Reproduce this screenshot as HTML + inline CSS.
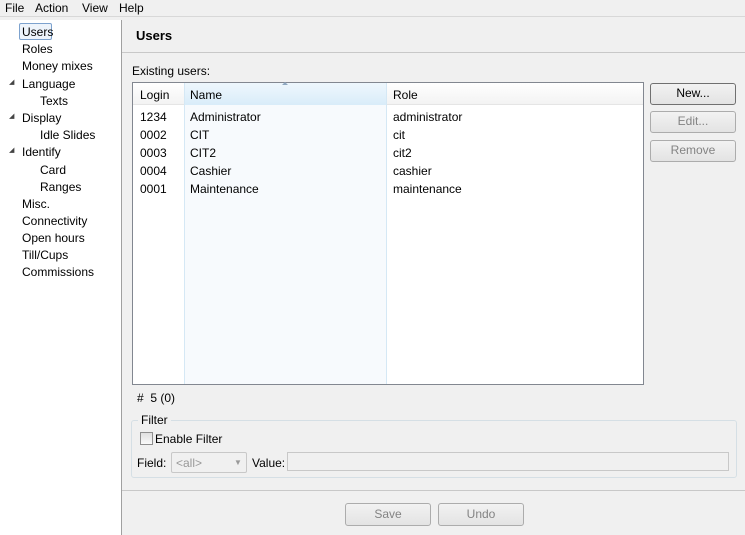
<!DOCTYPE html>
<html><head><style>
*{box-sizing:border-box;margin:0;padding:0}
body{width:745px;height:535px;background:#f0f0f0;font-family:"Liberation Sans",sans-serif;font-size:12px;color:#000;position:relative;overflow:hidden}
.a{position:absolute;white-space:nowrap}
.btn{position:absolute;border:1px solid #acacac;border-radius:3px;background:linear-gradient(#f2f2f2,#e3e3e3);text-align:center;line-height:19px;color:#838383}
</style></head><body>
<div class="a" style="left:0;top:0;width:745px;height:17px;background:#f0f0f0;border-bottom:1px solid #d8d8d8"></div>
<div class="a" style="left:5px;top:1px">File</div>
<div class="a" style="left:35px;top:1px">Action</div>
<div class="a" style="left:82px;top:1px">View</div>
<div class="a" style="left:119px;top:1px">Help</div>
<div class="a" style="left:0;top:20px;width:122px;height:515px;background:#fff;border-right:1px solid #a0a0a0"></div>
<div class="a" style="left:19px;top:23px;width:33px;height:17px;border:1px solid #7da2ce;background:#eef4fb;border-radius:2px"></div>
<div class="a" style="left:22px;top:25px">Users</div>
<div class="a" style="left:22px;top:42px">Roles</div>
<div class="a" style="left:22px;top:59px">Money mixes</div>
<div class="a" style="left:9px;top:78px;font-size:7px;color:#444">◢</div>
<div class="a" style="left:22px;top:77px">Language</div>
<div class="a" style="left:40px;top:94px">Texts</div>
<div class="a" style="left:9px;top:112px;font-size:7px;color:#444">◢</div>
<div class="a" style="left:22px;top:111px">Display</div>
<div class="a" style="left:40px;top:128px">Idle Slides</div>
<div class="a" style="left:9px;top:146px;font-size:7px;color:#444">◢</div>
<div class="a" style="left:22px;top:145px">Identify</div>
<div class="a" style="left:40px;top:163px">Card</div>
<div class="a" style="left:40px;top:180px">Ranges</div>
<div class="a" style="left:22px;top:197px">Misc.</div>
<div class="a" style="left:22px;top:214px">Connectivity</div>
<div class="a" style="left:22px;top:231px">Open hours</div>
<div class="a" style="left:22px;top:248px">Till/Cups</div>
<div class="a" style="left:22px;top:265px">Commissions</div>
<div class="a" style="left:136px;top:28px;font-weight:bold;font-size:13px">Users</div>
<div class="a" style="left:122px;top:52px;width:623px;border-top:1px solid #c8c8c8"></div>
<div class="a" style="left:132px;top:64px">Existing users:</div>
<div class="a" style="left:132px;top:82px;width:512px;height:303px;background:#fff;border:1px solid #828790"></div>
<div class="a" style="left:185px;top:83px;width:201px;height:301px;background:#f7fafd"></div>
<div class="a" style="left:133px;top:83px;width:510px;height:22px;background:linear-gradient(#fff,#f3f3f3);border-bottom:1px solid #e5e5e5"></div>
<div class="a" style="left:185px;top:83px;width:201px;height:22px;background:linear-gradient(#eef7fd,#d9ecf9)"></div>
<div class="a" style="left:184px;top:83px;height:301px;border-left:1px solid #d5e8f5"></div>
<div class="a" style="left:386px;top:83px;height:301px;border-left:1px solid #d5e8f5"></div>
<div class="a" style="left:282px;top:82px;width:0;height:0;border-left:3px solid transparent;border-right:3px solid transparent;border-bottom:3px solid #8fa8c0"></div>
<div class="a" style="left:140px;top:88px">Login</div>
<div class="a" style="left:190px;top:88px">Name</div>
<div class="a" style="left:393px;top:88px">Role</div>
<div class="a" style="left:140px;top:108px;line-height:18px">1234<br>0002<br>0003<br>0004<br>0001</div>
<div class="a" style="left:190px;top:108px;line-height:18px">Administrator<br>CIT<br>CIT2<br>Cashier<br>Maintenance</div>
<div class="a" style="left:393px;top:108px;line-height:18px">administrator<br>cit<br>cit2<br>cashier<br>maintenance</div>
<div class="btn" style="left:650px;top:83px;width:86px;height:22px;border-color:#707070;color:#000">New...</div>
<div class="btn" style="left:650px;top:111px;width:86px;height:22px">Edit...</div>
<div class="btn" style="left:650px;top:140px;width:86px;height:22px">Remove</div>
<div class="a" style="left:137px;top:391px">#&nbsp; 5 (0)</div>
<div class="a" style="left:131px;top:420px;width:606px;height:58px;border:1px solid #d5dfe5;border-radius:3px"></div>
<div class="a" style="left:138px;top:413px;background:#f0f0f0;padding:0 3px">Filter</div>
<div class="a" style="left:140px;top:432px;width:13px;height:13px;border:1px solid #8f8f8f;background:linear-gradient(#e0e0e0,#fafafa)"></div>
<div class="a" style="left:155px;top:432px">Enable Filter</div>
<div class="a" style="left:137px;top:456px">Field:</div>
<div class="a" style="left:171px;top:452px;width:76px;height:21px;border:1px solid #c8c8c8;border-radius:2px;background:#f0f0f0;color:#999;padding:3px 0 0 4px">&lt;all&gt;<span style="position:absolute;left:62px;top:5px;font-size:8px;color:#999">▼</span></div>
<div class="a" style="left:252px;top:456px">Value:</div>
<div class="a" style="left:287px;top:452px;width:442px;height:19px;border:1px solid #c8c8c8;background:#f0f0f0"></div>
<div class="a" style="left:122px;top:490px;width:623px;border-top:1px solid #c8c8c8"></div>
<div class="btn" style="left:345px;top:503px;width:86px;height:23px;line-height:21px">Save</div>
<div class="btn" style="left:438px;top:503px;width:86px;height:23px;line-height:21px">Undo</div>
</body></html>
